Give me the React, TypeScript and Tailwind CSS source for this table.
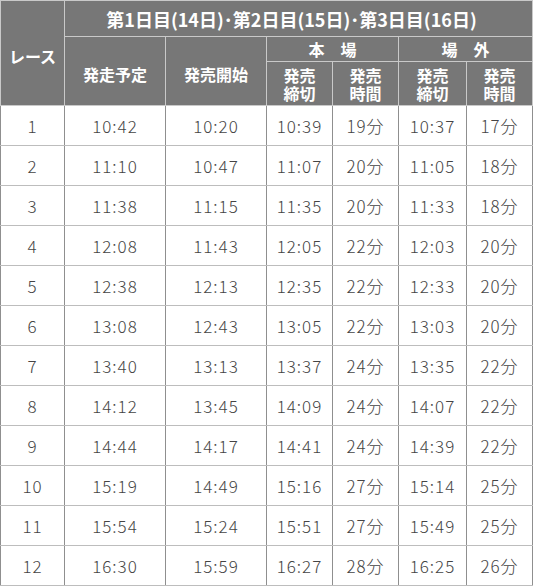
const rows = [
  ["1", "10:42", "10:20", "10:39", "19分", "10:37", "17分"],
  ["2", "11:10", "10:47", "11:07", "20分", "11:05", "18分"],
  ["3", "11:38", "11:15", "11:35", "20分", "11:33", "18分"],
  ["4", "12:08", "11:43", "12:05", "22分", "12:03", "20分"],
  ["5", "12:38", "12:13", "12:35", "22分", "12:33", "20分"],
  ["6", "13:08", "12:43", "13:05", "22分", "13:03", "20分"],
  ["7", "13:40", "13:13", "13:37", "24分", "13:35", "22分"],
  ["8", "14:12", "13:45", "14:09", "24分", "14:07", "22分"],
  ["9", "14:44", "14:17", "14:41", "24分", "14:39", "22分"],
  ["10", "15:19", "14:49", "15:16", "27分", "15:14", "25分"],
  ["11", "15:54", "15:24", "15:51", "27分", "15:49", "25分"],
  ["12", "16:30", "15:59", "16:27", "28分", "16:25", "26分"],
];

const th = "border border-[#c9c9c9] bg-[#777777] text-white font-bold text-center align-middle p-0";

export default function App() {
  return (
    <div className="w-[533px] h-[586px] bg-white font-['Noto_Sans_CJK_JP',sans-serif]">
      <table className="table-fixed border-collapse w-[532px]">
        <colgroup>
          <col className="w-[64px]" />
          <col className="w-[101px]" />
          <col className="w-[101px]" />
          <col className="w-[66px]" />
          <col className="w-[66px]" />
          <col className="w-[68px]" />
          <col className="w-[66px]" />
        </colgroup>
        <thead>
          <tr className="h-[36px]">
            <th rowSpan={3} className={`${th} text-[16px] pt-[6px]`}>レース</th>
            <th colSpan={6} className={`${th} text-[18px] leading-none pr-[14px]`}>
              第1日目(14日)･第2日目(15日)･第3日目(16日)
            </th>
          </tr>
          <tr className="h-[25px]">
            <th rowSpan={2} className={`${th} text-[16px] pt-[6px]`}>発走予定</th>
            <th rowSpan={2} className={`${th} text-[16px] pt-[6px]`}>発売開始</th>
            <th colSpan={2} className={`${th} text-[16px] leading-none`}>本　場</th>
            <th colSpan={2} className={`${th} text-[16px] leading-none`}>場　外</th>
          </tr>
          <tr className="h-[44px]">
            <th className={`${th} text-[16px] leading-[18px]`}>発売<br />締切</th>
            <th className={`${th} text-[16px] leading-[18px]`}>発売<br />時間</th>
            <th className={`${th} text-[16px] leading-[18px]`}>発売<br />締切</th>
            <th className={`${th} text-[16px] leading-[18px]`}>発売<br />時間</th>
          </tr>
        </thead>
        <tbody>
          {rows.map((r) => (
            <tr key={r[0]} className="h-[40px]">
              {r.map((c, i) => (
                <td
                  key={i}
                  className="border-y border-y-[#bdbdbd] border-x border-x-[#8f8f8f] text-center align-middle p-0 text-[17px] font-light tracking-[0.06em] text-[#444444] leading-none"
                >
                  {c}
                </td>
              ))}
            </tr>
          ))}
        </tbody>
      </table>
    </div>
  );
}
